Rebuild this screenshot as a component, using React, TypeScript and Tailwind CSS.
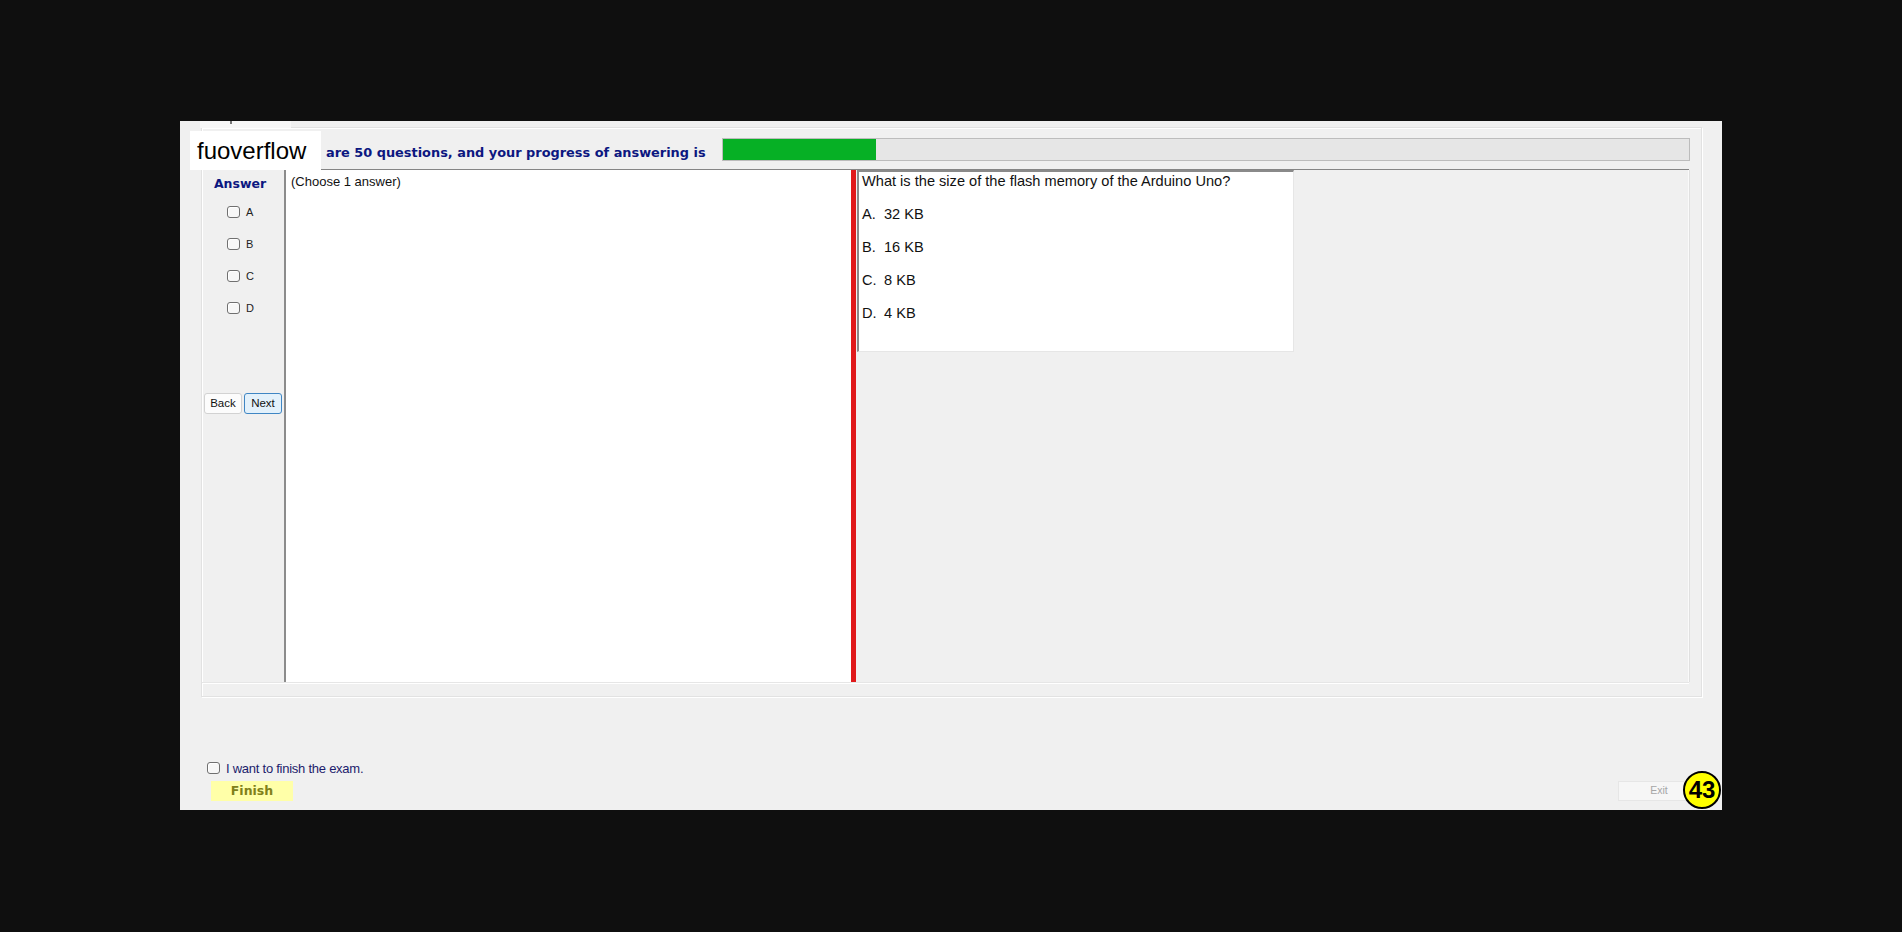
import React from "react";

function Box() {
  return (
    <span className="block w-[13px] h-[12px] border border-[#707070] rounded-[3px] bg-[#f7f7f7] shadow-[inset_1px_1px_0_#ffffff]" />
  );
}

export default function App() {
  const letters = ["A", "B", "C", "D"];
  const options = [
    ["A.", "32 KB"],
    ["B.", "16 KB"],
    ["C.", "8 KB"],
    ["D.", "4 KB"],
  ];
  return (
    <div className="w-[1902px] h-[932px] bg-[#0f0f0f] pl-[180px] pt-[121px] overflow-hidden font-['Liberation_Sans',Arial,sans-serif]">
      <div className="relative w-[1542px] h-[689px] bg-[#f0f0f0] flex flex-col">
        {/* cut-off element at top */}
        <div className="absolute left-[20px] top-0 w-[91px] h-[7px] bg-[#f7f7f7]">
          <div className="absolute left-[30px] top-0 w-[2px] h-[3px] bg-[#777]" />
        </div>

        {/* group box */}
        <div className="ml-[21px] mt-[6px] w-[1501px] h-[570px] border border-[#e2e2e2] shadow-[inset_1px_1px_0_#ffffff,1px_1px_0_#ffffff] flex flex-col">
          {/* header row */}
          <div className="h-[41px] flex items-start pr-[11px]">
            <span className="ml-[124px] mt-[17px] leading-[16px] text-[12.9px] font-bold text-[#0c1780] font-['DejaVu_Sans',Verdana,sans-serif] whitespace-nowrap">
              are 50 questions, and your progress of answering is
            </span>
            <div className="ml-auto mt-[10px] w-[968px] h-[23px] bg-[#e6e6e6] border border-[#bcbcbc] flex">
              <div className="w-[153px] h-full bg-[#06b025]" />
            </div>
          </div>

          {/* inner panel */}
          <div className="w-[1487px] h-[514px] flex border-b border-[#e6e6e6] shadow-[0_1px_0_#ffffff]">
            {/* answer column */}
            <div className="w-[82px] flex flex-col">
              <div className="w-[76px] mt-[7px] text-center leading-[16px] text-[12.5px] font-bold text-[#0c1780] font-['DejaVu_Sans',Verdana,sans-serif]">
                Answer
              </div>
              <div className="mt-[4px] flex flex-col">
                {letters.map((l) => (
                  <div key={l} className="h-[32px] flex items-center pl-[25px]">
                    <Box />
                    <span className="ml-[6px] text-[11px] text-[#222] leading-none">{l}</span>
                  </div>
                ))}
              </div>
              <div className="mt-[69px] pl-[2px] flex gap-[2px]">
                <div className="w-[38px] h-[21px] flex items-center justify-center bg-[#fcfcfc] border border-[#d2d2d2] rounded-[3px] text-[11.5px] text-[#111]">
                  Back
                </div>
                <div className="w-[38px] h-[21px] flex items-center justify-center bg-[#e3f1fb] border border-[#3f86c4] rounded-[3px] text-[11.5px] text-[#111]">
                  Next
                </div>
              </div>
            </div>

            {/* split area */}
            <div className="w-[1405px] flex border-t border-[#858585]">
              <div className="w-[567px] h-full bg-white border-l-2 border-[#8c8c8c] pl-[5px] pt-[4px]">
                <div className="text-[13px] leading-[16px] text-[#111]">(Choose 1 answer)</div>
              </div>
              <div className="w-[5px] h-full bg-[#e0191b]" />
              <div className="ml-[1px] self-start w-[437px] h-[182px] bg-white border-l-2 border-t-2 border-[#8a8a8a] border-r border-b border-r-[#e6e6e6] border-b-[#e6e6e6] pl-[3px] flex flex-col gap-[15px] text-[14.6px] leading-[18px] text-[#111]">
                <div>What is the size of the flash memory of the Arduino Uno?</div>
                {options.map(([k, v]) => (
                  <div key={k} className="flex whitespace-pre">
                    <span className="w-[22px]">{k}</span>
                    <span>{v}</span>
                  </div>
                ))}
              </div>
              <div className="flex-1 h-full border-r border-[#fafafa] shadow-[1px_0_0_#e0e0e0]" />
            </div>
          </div>
        </div>

        {/* bottom area */}
        <div className="flex-1 flex items-end pb-[9px] pl-[27px] pr-[22px]">
          <div className="flex flex-col">
            <div className="h-[16px] flex items-center">
              <Box />
              <span className="ml-[6px] text-[13px] tracking-[-0.25px] text-[#1c1c6c] leading-none">
                I want to finish the exam.
              </span>
            </div>
            <div className="mt-[5px] ml-[4px] w-[82px] h-[20px] bg-[#ffffa8] flex items-center justify-center text-[12.5px] font-bold text-[#80801a] font-['DejaVu_Sans',Verdana,sans-serif]">
              Finish
            </div>
          </div>
          <div className="ml-auto w-[82px] h-[20px] bg-[#f6f6f6] border border-[#e6e6e6] flex items-center justify-center text-[10.5px] text-[#a6a6a6]">
            Exit
          </div>
        </div>

        {/* badge */}
        <div className="absolute right-[1px] bottom-[1px] w-[38px] h-[38px] rounded-full bg-[#ffff00] border-2 border-black flex items-center justify-center text-[24px] font-bold text-black leading-none">
          43
        </div>

        {/* watermark label */}
        <div className="absolute left-[10px] top-[10px] w-[131px] h-[39px] bg-white flex items-center pl-[7px] text-[24px] text-black leading-none">
          fuoverflow
        </div>
      </div>
    </div>
  );
}
